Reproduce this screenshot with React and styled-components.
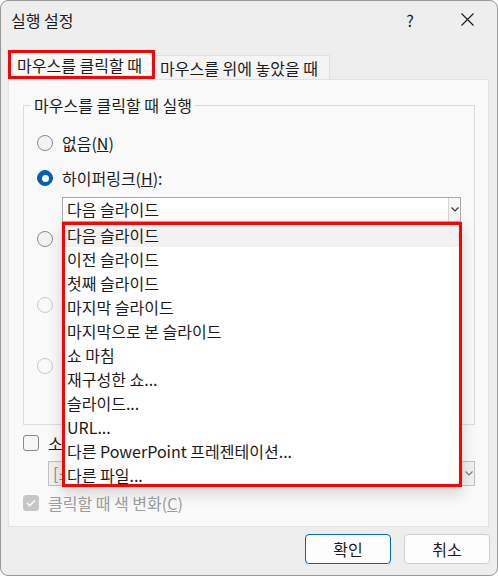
import styled, { createGlobalStyle } from "styled-components";

const GlobalStyle = createGlobalStyle`
  body {
    margin: 0;
    background: #ffffff;
  }
  * {
    box-sizing: border-box;
  }
`;

const FONT = `"Noto Sans CJK KR", "Noto Sans", sans-serif`;

const actions = [
  "다음 슬라이드",
  "이전 슬라이드",
  "첫째 슬라이드",
  "마지막 슬라이드",
  "마지막으로 본 슬라이드",
  "쇼 마침",
  "재구성한 쇼...",
  "슬라이드...",
  "URL...",
  "다른 PowerPoint 프레젠테이션...",
  "다른 파일...",
];

function Chevron() {
  return (
    <svg width="8" height="5" viewBox="0 0 8 5">
      <path d="M0.5 0.5 L4 4 L7.5 0.5" fill="none" stroke="#333" strokeWidth="1.2" />
    </svg>
  );
}

function Combo({ value, width, disabled, children }) {
  return (
    <ComboBox $width={width} $disabled={disabled}>
      <ComboText $disabled={disabled}>{value}</ComboText>
      <ComboButton $disabled={disabled}>
        <Chevron />
      </ComboButton>
      {children}
    </ComboBox>
  );
}

function Radio({ checked, disabled, children }) {
  return (
    <OptionRow>
      <RadioDot $checked={checked} $disabled={disabled} />
      {children && <OptionLabel $disabled={disabled}>{children}</OptionLabel>}
    </OptionRow>
  );
}

export default function App() {
  return (
    <>
      <GlobalStyle />
      <Window>
        <TitleBar>
          <Title>실행 설정</Title>
          <CaptionButton $first>?</CaptionButton>
          <CaptionButton>
            <svg width="13" height="13" viewBox="0 0 13 13">
              <path d="M0.5 0.5 L12.5 12.5 M12.5 0.5 L0.5 12.5" stroke="#1a1a1a" strokeWidth="1.1" />
            </svg>
          </CaptionButton>
        </TitleBar>

        <TabStrip>
          <Tab $active>마우스를 클릭할 때</Tab>
          <Tab>마우스를 위에 놓았을 때</Tab>
        </TabStrip>

        <Panel>
          <Group>
            <Legend>마우스를 클릭할 때 실행</Legend>
            <GroupBody>
              <Radio>
                없음(<u>N</u>)
              </Radio>
              <Spaced $top={11}>
                <Radio checked>
                  하이퍼링크(<u>H</u>):
                </Radio>
              </Spaced>
              <Indented $top={7}>
                <Combo value="다음 슬라이드" width={399}>
                  <DropList>
                    {actions.map((a, i) => (
                      <DropItem key={a} $hover={i === 0}>
                        {a}
                      </DropItem>
                    ))}
                  </DropList>
                </Combo>
              </Indented>
              {/* the rows below sit under the open list; only their radios show */}
              <Spaced $top={5}>
                <Radio />
              </Spaced>
              <Indented $top={6}>
                <FieldRow>
                  <TextField />
                  <SmallButton />
                </FieldRow>
              </Indented>
              <Spaced $top={12}>
                <Radio disabled />
              </Spaced>
              <Indented $top={6}>
                <Combo value="" width={390} disabled />
              </Indented>
              <Spaced $top={6}>
                <Radio disabled />
              </Spaced>
              <Indented $top={6}>
                <Combo value="" width={390} disabled />
              </Indented>
            </GroupBody>
          </Group>

          <Spaced $top={8}>
            <CheckRow>
              <CheckBox />
              <OptionLabel>소리 재생(P):</OptionLabel>
            </CheckRow>
          </Spaced>
          <Indented $top={8}>
            <Combo value="[소리 없음]" width={427} disabled />
          </Indented>
          <Spaced $top={7}>
            <CheckRow>
              <CheckBox $checked $disabled>
                <svg width="10" height="8" viewBox="0 0 10 8">
                  <path d="M1 4 L3.8 6.8 L9 1.2" fill="none" stroke="#fff" strokeWidth="1.3" />
                </svg>
              </CheckBox>
              <OptionLabel $disabled>
                클릭할 때 색 변화(<u>C</u>)
              </OptionLabel>
            </CheckRow>
          </Spaced>
        </Panel>

        <ButtonBar>
          <DialogButton $primary>확인</DialogButton>
          <DialogButton>취소</DialogButton>
        </ButtonBar>
      </Window>
    </>
  );
}

const Window = styled.div`
  width: 498px;
  height: 576px;
  border: 1px solid #9a9a9a;
  border-radius: 8px;
  background: #eeeeee;
  display: flex;
  flex-direction: column;
  overflow: hidden;
  font-family: ${FONT};
  font-size: 16px;
  color: #1b1b1b;
`;

const TitleBar = styled.div`
  height: 37px;
  display: flex;
  align-items: center;
  padding: 0 7px 0 10px;
`;

const Title = styled.div`
  flex: 1;
  line-height: 20px;
  margin-top: 1px;
`;

const CaptionButton = styled.div`
  width: 46px;
  height: 37px;
  display: flex;
  align-items: center;
  justify-content: center;
  font-size: 16px;
  margin-right: ${(p) => (p.$first ? "11px" : "0")};
`;

const TabStrip = styled.div`
  display: flex;
  align-items: flex-end;
  margin-top: 12px;
  padding-left: 7px;
`;

const Tab = styled.div`
  height: ${(p) => (p.$active ? "29px" : "24px")};
  width: ${(p) => (p.$active ? "147px" : "175px")};
  padding-left: ${(p) => (p.$active ? "9px" : "5px")};
  display: flex;
  align-items: center;
  line-height: 20px;
  background: ${(p) => (p.$active ? "#f9f9f9" : "#f4f4f4")};
  border-top: 1px solid #e2e2e2;
  border-right: 1px solid #e2e2e2;
  outline: ${(p) => (p.$active ? "3px solid #ff0000" : "none")};
  outline-offset: -3px;
  white-space: nowrap;
`;

const Panel = styled.div`
  margin-left: 7px;
  width: 481px;
  height: 448px;
  flex-shrink: 0;
  background: #f9f9f9;
  border: 1px solid #e3e3e3;
  padding: 0 0 0 14px;
`;

const Group = styled.fieldset`
  width: 452px;
  margin: 15px 0 0;
  padding: 0;
  min-width: 0;
  border: 1px solid #dcdcdc;
`;

const Legend = styled.legend`
  margin-left: 7px;
  padding: 0 3px;
  line-height: 20px;
  height: 20px;
`;

const GroupBody = styled.div`
  padding: 16px 0 15px 13px;
`;

const Spaced = styled.div`
  margin-top: ${(p) => p.$top}px;
`;

const Indented = styled.div`
  margin-top: ${(p) => p.$top}px;
  margin-left: 25px;
`;

const OptionRow = styled.div`
  height: 24px;
  display: flex;
  align-items: center;
  gap: 9px;
`;

const CheckRow = styled.div`
  height: 20px;
  display: flex;
  align-items: center;
  gap: 9px;
`;

const OptionLabel = styled.span`
  line-height: 20px;
  white-space: nowrap;
  color: ${(p) => (p.$disabled ? "#9d9d9d" : "#1b1b1b")};
`;

const RadioDot = styled.span`
  width: 16px;
  height: 16px;
  flex-shrink: 0;
  border-radius: 50%;
  border: 1px solid
    ${(p) => (p.$checked ? "#005fb8" : p.$disabled ? "#cacaca" : "#8a8a8a")};
  background: ${(p) => (p.$checked ? "#005fb8" : p.$disabled ? "#f9f9f9" : "#f3f3f3")};
  display: flex;
  align-items: center;
  justify-content: center;
  &::after {
    content: "";
    display: ${(p) => (p.$checked ? "block" : "none")};
    width: 7px;
    height: 7px;
    border-radius: 50%;
    background: #ffffff;
  }
`;

const CheckBox = styled.span`
  width: 16px;
  height: 16px;
  flex-shrink: 0;
  border-radius: 3px;
  border: 1px solid ${(p) => (p.$disabled ? "#c6c6c6" : "#8a8a8a")};
  background: ${(p) => (p.$checked ? "#c6c6c6" : "#f6f6f6")};
  display: flex;
  align-items: center;
  justify-content: center;
`;

const ComboBox = styled.div`
  position: relative;
  width: ${(p) => p.$width}px;
  height: 25px;
  display: flex;
  border: 1px solid ${(p) => (p.$disabled ? "#c2c2c2" : "#a9a9a9")};
  background: ${(p) => (p.$disabled ? "#f1f1f1" : "#ffffff")};
`;

const ComboText = styled.div`
  flex: 1;
  padding-left: 4px;
  line-height: 22px;
  white-space: nowrap;
  overflow: hidden;
  color: ${(p) => (p.$disabled ? "#8a8a8a" : "#1b1b1b")};
`;

const ComboButton = styled.div`
  width: 12px;
  border-left: 1px solid ${(p) => (p.$disabled ? "#d2d2d2" : "#d6d6d6")};
  background: ${(p) => (p.$disabled ? "#f1f1f1" : "#f7f7f7")};
  display: flex;
  align-items: center;
  justify-content: center;
  opacity: ${(p) => (p.$disabled ? 0.6 : 1)};
`;

const DropList = styled.div`
  position: absolute;
  top: 24px;
  left: -1px;
  width: 400px;
  z-index: 10;
  padding-top: 1px;
  background: #ffffff;
  outline: 3px solid #ff0000;
  outline-offset: -3px;
  box-shadow: 0 6px 14px rgba(0, 0, 0, 0.16);
`;

const DropItem = styled.div`
  height: 24px;
  padding-left: 5px;
  line-height: 24px;
  white-space: nowrap;
  background: ${(p) => (p.$hover ? "#f2f2f2" : "transparent")};
`;

const FieldRow = styled.div`
  display: flex;
  gap: 8px;
  height: 24px;
`;

const TextField = styled.div`
  width: 290px;
  border: 1px solid #a9a9a9;
  background: #ffffff;
`;

const SmallButton = styled.div`
  width: 90px;
  border: 1px solid #d0d0d0;
  border-radius: 4px;
  background: #fdfdfd;
`;

const ButtonBar = styled.div`
  display: flex;
  justify-content: flex-end;
  gap: 13px;
  margin-top: 7px;
  padding-right: 7px;
`;

const DialogButton = styled.div`
  width: 86px;
  height: 30px;
  border-radius: 4px;
  border: 1px solid ${(p) => (p.$primary ? "#0067c0" : "#d0d0d0")};
  background: #fdfdfd;
  display: flex;
  align-items: center;
  justify-content: center;
  line-height: 20px;
`;
